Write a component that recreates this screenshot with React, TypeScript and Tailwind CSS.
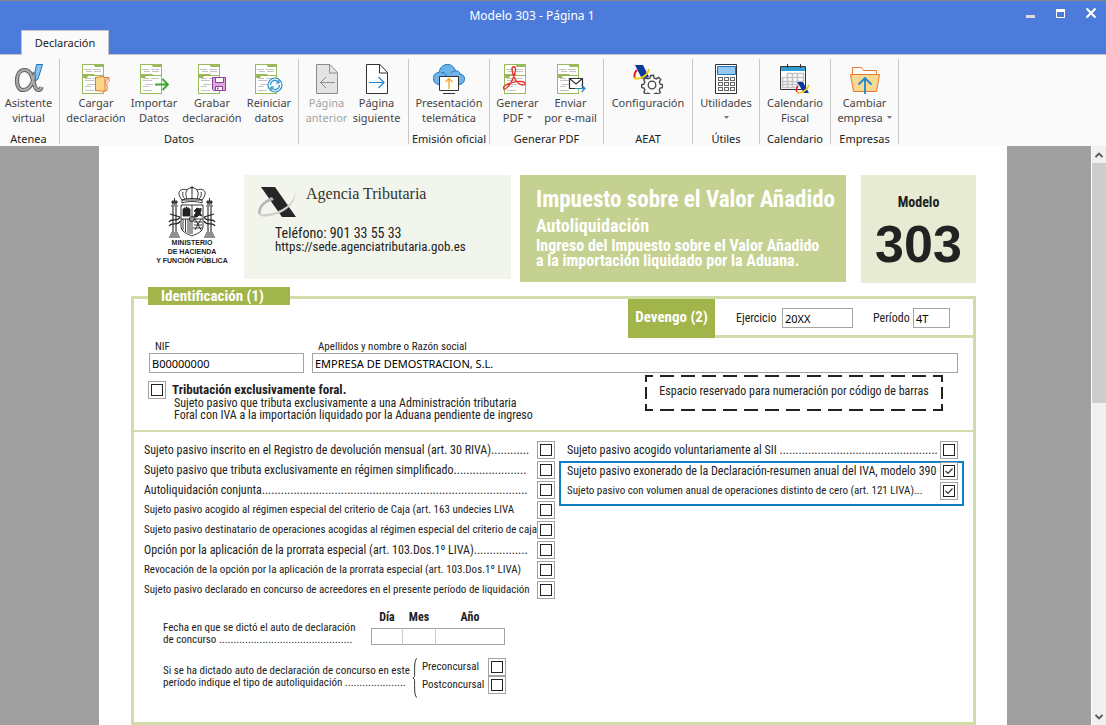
import type { ReactNode } from "react";

function Doc({ children }: { children?: ReactNode }) {
    return (
        <svg width="30" height="30" viewBox="0 0 30 30" fill="none">
            <rect x="1.5" y="0.5" width="21" height="29" fill="#fff" stroke="#9aba59" />
            <path d="M12 0h11v3H14zM1 10h12l1 1h9v1H7l-1 2H1z" fill="#9aba59" />
            <path d="M3 5.5h7M12 5.5h8M5 7.5h6M13 7.5h7M4 14.5h6M12 14.5h8M4 16.5h9M6 20.5h8M4 22.5h6M4 26.5h9" stroke="#c3c3c3" />
            {children}
        </svg>
    );
}

function AlphaIcon() {
    return (
        <svg width="30" height="30" viewBox="0 0 30 30" fill="none">
            <path d="M21 8C20 15 17 26 9 26 4.500 26 3 21 3 16.500 3 11 5.500 6 10.500 6c6 0 7.500 6 9 11.500 1 5 2.500 8.500 5 8.500 1.500 0 2.500-1 3-3" stroke="#5e5e5e" strokeWidth="4.200" />
            <path d="M21 8C20 15 17 26 9 26 4.500 26 3 21 3 16.500 3 11 5.500 6 10.500 6c6 0 7.500 6 9 11.500 1 5 2.500 8.500 5 8.500 1.500 0 2.500-1 3-3" stroke="#acacac" strokeWidth="2.200" />
            <path d="M22.500.5h6L24 15l-2.500 2-.5-9z" fill="#84c3f2" stroke="#1e74b8" />
        </svg>
    );
}

function LoadIcon() {
    return (
        <Doc>
            <path d="M14.500 13.500h13l-3 4-2 9h-8z" fill="#fdebd0" stroke="#e8792c" />
            <path d="M14.500 13.500 22 12.500l2 2v13l-9.500-1z" fill="#f8d78c" stroke="#e8792c" />
            <path d="M24 26.500h2v-7l2-2v-4" stroke="#e8792c" />
        </Doc>
    );
}

function ImportIcon() {
    return (
        <Doc>
            <path d="M16 20.500h13M23.500 15l5.500 5.500-5.500 5.500" stroke="#3ba52c" strokeWidth="1.800" />
        </Doc>
    );
}

function SaveIcon() {
    return (
        <Doc>
            <path d="M15.500 13.500h13v13h-12l-1-1z" fill="#d7a9dc" stroke="#913e9c" />
            <path d="M18.500 13.500h8v5h-8z" fill="#fff" stroke="#913e9c" />
            <path d="M18.500 22.500h7v4h-7z" fill="#fff" stroke="#913e9c" />
            <path d="M20 23.500h1.500v2H20z" fill="#913e9c" />
        </Doc>
    );
}

function ResetIcon() {
    return (
        <Doc>
            <circle cx="21" cy="21" r="7" fill="#f4fafd" stroke="#2a8fcb" strokeWidth="1.200" />
            <path d="M16.500 21c0-5 6-6 8-2.500M25 16v3h-3M25.500 21c0 5-6 6-8 2.500M17 26v-3h3" stroke="#2a8fcb" strokeWidth="1.200" />
        </Doc>
    );
}

function PageIcon({ back }: { back?: boolean }) {
    const line = back ? "#8c8c8c" : "#333";
    return (
        <svg width="30" height="30" viewBox="0 0 30 30" fill="none">
            <path d="M4.500.5H18l7.500 8v21h-21z" fill={back ? "#e3e3e3" : "#fff"} stroke={line} />
            <path d="M17.500.5v8.500h8" stroke={line} />
            {back ? (
                <path d="M23 18.500H8.500M14 13l-5.500 5.500L14 24" stroke="#8c8c8c" />
            ) : (
                <path d="M7 18.500h15M16.500 13l5.500 5.500-5.500 5.500" stroke="#1f86d0" strokeWidth="1.200" />
            )}
        </svg>
    );
}

function CloudIcon() {
    return (
        <svg width="34" height="30" viewBox="0 0 34 30" fill="none">
            <path d="M7 20.500C3 20 1 17 1.500 13.500 2 10 4.500 8.500 7 8.500 8 3 11.500.5 15.500.5c4 0 7 2.500 8 6.500 2.500-.5 4.500 1 4.500 3 3 .5 5 2.500 4.500 5.500-.5 3-2.500 5-5.500 5z" fill="#6db4ea" stroke="#1e74b8" />
            <path d="M9 9c3-1 5 1 5.500 3M23 7c-2 0-3.500 1-4 2" stroke="#1e74b8" />
            <path d="M7.500 12.500h19v14h-19z" fill="#fff" stroke="#333" />
            <path d="M11 29.500h12" stroke="#333" />
            <path d="M17 25v-10M13.500 18l3.500-3.500 3.500 3.500" stroke="#f2a92c" strokeWidth="1.400" />
        </svg>
    );
}

function PdfIcon() {
    return (
        <Doc>
            <path d="M9 5c0-3 3.500-3 3.500 0 0 5-4.500 16-9.500 19.500-3 2-4-.5-1.500-2.500C6 19 13 17 18.500 17.500c4.500.5 4.500 4 1 3.500C13 20 9 10 9 5z" stroke="#e5352d" strokeWidth="1.400" />
        </Doc>
    );
}

function MailIcon() {
    return (
        <Doc>
            <path d="M13.500 14.500h13v10h-13z" fill="#fff" stroke="#333" strokeWidth="1.200" />
            <path d="m13.500 14.500 6.500 5.500 6.500-5.500" stroke="#333" strokeWidth="1.200" />
            <path d="M19 24.500h10M25.500 21l3.500 3.500-3.500 3.500" stroke="#1f86d0" strokeWidth="1.200" />
        </Doc>
    );
}

function GearIcon() {
    return (
        <svg width="30" height="30" viewBox="0 0 30 30" fill="none">
            <path d="M2 1h8l6 12-7 2z" fill="#0a3a9c" />
            <path d="M4 6C1 9 1 12 2 14" stroke="#e02020" strokeWidth="2" />
            <path d="M1 14c7 2 13-2 15-9" stroke="#f7c61a" strokeWidth="2" />
            <path d="m17.500 11.500 3-.2.6 2.700 2.200.9 2.400-1.500 2.100 2.100-1.500 2.400.9 2.200 2.300.5v3l-2.300.5-.9 2.200 1.100 1.900-2.100 2-2-1-2.200.9-.6 1.700h-3l-.5-1.700-2.200-.9-2 1-2-2 1.100-2-.9-2.100-2.300-.5v-3l2.300-.5.9-2.200-1.200-2 2-2.200 2.200 1.200 2.100-.9z" fill="#fafafa" stroke="#444" strokeWidth="1.300" />
            <circle cx="19" cy="21" r="3.800" stroke="#444" strokeWidth="1.300" />
        </svg>
    );
}

function CalculatorIcon() {
    return (
        <svg width="30" height="30" viewBox="0 0 30 30" fill="none">
            <path d="M4.500.5h21v29h-21z" fill="#fff" stroke="#333" />
            <path d="M6.500 2.500h18v8h-18z" fill="#93c9f4" stroke="#1e74b8" />
            {[13.5, 18.5, 23.5].map((y) =>
                [7.5, 13.5, 19.5].map((x) => (
                    <rect key={`${x}-${y}`} x={x} y={y} width="4" height="3" stroke="#666" />
                ))
            )}
        </svg>
    );
}

function CalendarIcon() {
    return (
        <svg width="30" height="30" viewBox="0 0 30 30" fill="none">
            <path d="M.5 2.500h25v23H.5z" fill="#fff" stroke="#333" />
            <path d="M1 3h24v4H1z" fill="#2f9fd0" />
            <path d="M7.500 0v4M20.500 0v4" stroke="#333" />
            <path d="M7 9.500h16.500v4H2.500v4h21v-8M2.500 13.500v10h15v-14M7.500 9.500v14M12.500 9.500v14M2.500 20.500h16" stroke="#c4c4c4" strokeWidth="1.600" />
            <path d="M17 18h6l6 11h-5z" fill="#0a3a9c" />
            <path d="M18 22c-2 2-2 4-1 6" stroke="#e02020" strokeWidth="1.500" />
            <path d="M17 29c6 0 10-3 12-8" stroke="#f7c61a" strokeWidth="1.800" />
        </svg>
    );
}

function FolderIcon() {
    return (
        <svg width="30" height="30" viewBox="0 0 30 30" fill="none">
            <path d="M2.500 10.500v-7h9l2 3h13v4" fill="#fff" stroke="#e8792c" />
            <path d="M.5 10.500h29l-3 17h-23z" fill="#f7d992" stroke="#e8792c" />
            <path d="M15 30V14.500M8.500 20.500l6.500-6.500 6.500 6.500" stroke="#1f86d0" strokeWidth="1.800" />
        </svg>
    );
}

type Tool = { lines: string[]; icon: ReactNode; width: string; menu?: boolean; disabled?: boolean };
type Group = { name: string; width: string; tools: Tool[] };

const groups: Group[] = [
    { name: "Atenea", width: "w-[60px] pr-[2px]", tools: [{ lines: ["Asistente", "virtual"], icon: <AlphaIcon />, width: "w-[56px]" }] },
    {
        name: "Datos",
        width: "w-[239px]",
        tools: [
            { lines: ["Cargar", "declaración"], icon: <LoadIcon />, width: "ml-[6px] w-[58px]" },
            { lines: ["Importar", "Datos"], icon: <ImportIcon />, width: "w-[58px]" },
            { lines: ["Grabar", "declaración"], icon: <SaveIcon />, width: "w-[58px]" },
            { lines: ["Reiniciar", "datos"], icon: <ResetIcon />, width: "w-[56px]" },
        ],
    },
    {
        name: "",
        width: "w-[110px]",
        tools: [
            { lines: ["Página", "anterior"], icon: <PageIcon back />, width: "w-[50px]", disabled: true },
            { lines: ["Página", "siguiente"], icon: <PageIcon />, width: "mr-1 w-[50px]" },
        ],
    },
    { name: "Emisión oficial", width: "w-[81px]", tools: [{ lines: ["Presentación", "telemática"], icon: <CloudIcon />, width: "w-[76px]" }] },
    {
        name: "Generar PDF",
        width: "w-[114px]",
        tools: [
            { lines: ["Generar", "PDF"], icon: <PdfIcon />, width: "w-[52px]", menu: true },
            { lines: ["Enviar", "por e-mail"], icon: <MailIcon />, width: "mr-1 w-[54px]" },
        ],
    },
    { name: "AEAT", width: "w-[89px]", tools: [{ lines: ["Configuración"], icon: <GearIcon />, width: "w-[80px]" }] },
    { name: "Útiles", width: "w-[67px]", tools: [{ lines: ["Utilidades", ""], icon: <CalculatorIcon />, width: "w-[60px]", menu: true }] },
    { name: "Calendario", width: "w-[71px]", tools: [{ lines: ["Calendario", "Fiscal"], icon: <CalendarIcon />, width: "w-[64px]" }] },
    { name: "Empresas", width: "w-[68px]", tools: [{ lines: ["Cambiar", "empresa"], icon: <FolderIcon />, width: "w-[60px]", menu: true }] },
];

function ToolButton({ tool }: { tool: Tool }) {
    return (
        <button
            type="button"
            disabled={tool.disabled}
            className={`flex shrink-0 flex-col items-center whitespace-nowrap leading-[15px] ${tool.width} ${
                tool.disabled ? "text-[#a3a3a3]" : "text-[#444]"
            }`}
        >
            {tool.icon}
            <span className="mt-px">{tool.lines[0]}</span>
            {tool.lines.length > 1 && (
                <span className="flex h-[15px] items-center gap-1">
                    {tool.lines[1]}
                    {tool.menu && (
                        <svg width="5" height="3" viewBox="0 0 5 3">
                            <path d="M0 0h5L2.500 3z" fill="#777" />
                        </svg>
                    )}
                </span>
            )}
        </button>
    );
}

function TitleBar() {
    return (
        <header className="flex h-[55px] shrink-0 flex-col border-t border-b border-t-[#858585] border-b-[#c4c4c4] bg-[#4c7bdb]">
            <div className="flex h-[29px] items-center">
                <h1 className="flex-1 pl-[44px] text-center text-[12px] text-white">Modelo 303 - Página 1</h1>
                <div className="flex items-center gap-2 pr-1 pb-[5px]">
                    <button type="button" aria-label="Minimizar" className="grid h-5 w-[22px] place-items-center">
                        <svg width="10" height="10" viewBox="0 0 10 10">
                            <path d="M0 7h9v3H0z" fill="#dcdcdc" />
                        </svg>
                    </button>
                    <button type="button" aria-label="Maximizar" className="grid h-5 w-[22px] place-items-center">
                        <svg width="10" height="10" viewBox="0 0 10 10">
                            <path d="M0 1h9v9H0zM1 4v5h7V4z" fill="#fff" fillRule="evenodd" />
                        </svg>
                    </button>
                    <button type="button" aria-label="Cerrar" className="grid h-5 w-[22px] place-items-center">
                        <svg width="10" height="10" viewBox="0 0 10 10">
                            <path d="m.5.5 9 9M9.500.5l-9 9" stroke="#fff" strokeWidth="2.200" />
                        </svg>
                    </button>
                </div>
            </div>
            <nav className="-mb-px flex pl-[21px]">
                <button type="button" className="h-[25px] w-[88px] border border-b-0 border-[#c4c4c4] bg-[#fafafa] text-[11px] text-[#222]">
                    Declaración
                </button>
            </nav>
        </header>
    );
}

function Ribbon() {
    return (
        <div className="flex h-[91px] shrink-0 bg-[#fafafa] pt-1 pb-[2px] text-[11px] text-[#222]">
            {groups.map((group, i) => (
                <div key={i} className={`flex shrink-0 flex-col items-center border-r border-[#c8c8c8] pt-[5px] ${group.width}`}>
                    <div className="flex flex-1 items-start justify-center">
                        {group.tools.map((tool) => (
                            <ToolButton key={tool.lines.join(" ")} tool={tool} />
                        ))}
                    </div>
                    <span className="h-[11px] whitespace-nowrap leading-3">{group.name}</span>
                </div>
            ))}
        </div>
    );
}

function Tick({ id, checked }: { id: string; checked?: boolean }) {
    return (
        <span className="grid size-[18px] shrink-0 place-items-center border border-[#a3a3a3] bg-white">
            <input
                id={id}
                type="checkbox"
                defaultChecked={checked}
                className="peer col-start-1 row-start-1 size-3 appearance-none border border-[#222]"
            />
            <svg viewBox="0 0 12 12" className="pointer-events-none invisible col-start-1 row-start-1 size-3 peer-checked:visible">
                <path d="m2.500 6 2.500 2.500 4.500-5" fill="none" stroke="#333" strokeWidth="1.200" />
            </svg>
        </span>
    );
}

type Row = { id: string; text: string; dots?: number; checked?: boolean; small?: boolean };

function TickRow({ id, text, dots = 0, checked, small }: Row) {
    return (
        <div className="flex h-5 items-start justify-between">
            <label htmlFor={id} className={`whitespace-nowrap leading-[18px] ${small ? "text-[11px]" : "text-[12px]"}`}>
                {text}
                {".".repeat(dots)}
            </label>
            <Tick id={id} checked={checked} />
        </div>
    );
}

const leftRows: Row[] = [
    { id: "redeme", text: "Sujeto pasivo inscrito en el Registro de devolución mensual (art. 30 RIVA)", dots: 12 },
    { id: "simplificado", text: "Sujeto pasivo que tributa exclusivamente en régimen simplificado", dots: 23 },
    { id: "conjunta", text: "Autoliquidación conjunta", dots: 84 },
    { id: "caja", text: "Sujeto pasivo acogido al régimen especial del criterio de Caja (art. 163 undecies LIVA", small: true },
    { id: "destinatario", text: "Sujeto pasivo destinatario de operaciones acogidas al régimen especial del criterio de caja", small: true },
    { id: "prorrata", text: "Opción por la aplicación de la prorrata especial (art. 103.Dos.1º LIVA)", dots: 17 },
    { id: "revocacion", text: "Revocación de la opción por la aplicación de la prorrata especial (art. 103.Dos.1º LIVA)", small: true },
    { id: "concurso", text: "Sujeto pasivo declarado en concurso de acreedores en el presente período de liquidación", small: true },
];

function CoatOfArms() {
    return (
        <svg width="48" height="52" viewBox="0 0 48 52" fill="none" stroke="#222" strokeWidth="0.900">
            <path d="M12 11c-4-7 4-9 7-7 2-3 8-3 10 0 4-2 11 0 7 7l-2 3H14z" />
            <path d="M14 14c5-2 15-2 20 0v3c-5-2-15-2-20 0zM24 0v4M22.500 1.500h3M19 4c-2 3-1 6 0 9M29 4c2 3 1 6 0 9M24 4v9M15 6c-1 3 0 5 2 7M33 6c1 3 0 5-2 7" />
            <path d="M13 19h22v21c0 6-5 7-11 10-6-3-11-4-11-10zM24 19v29M13 33h22" fill="#fff" />
            <path d="M15 30v-7h1v-1h1v1h1v-2h1v2h1v-1h1v1h1v7z" fill="#222" />
            <path d="M26 31c0-3 2-3 2-5l-2-1 3-3 3 1 1-1v3l-1 2 2 3-3-1-2 2z" fill="#222" />
            <path d="M15 33v11M17.500 33v13M20 33v14M22 33v15M26 36h8M26 39h8M25 42h9M27 33l6 11M33 33l-6 11" />
            <circle cx="24" cy="33" r="2.500" fill="#999" />
            <path d="M5 21v25M8 21v25M40 21v25M43 21v25M3 20h7M38 20h7M4 18h5M39 18h5M3 47h7M38 47h7M1 51h11M36 51h11M2 49h9M37 49h9" strokeWidth="1.100" />
            <path d="M4 15h5v2H4zM39 15h5v2h-5zM6.500 12v3M41.500 12v3" fill="#555" />
            <path d="M1 36c3-5 8 1 11-5M1 40c3-5 9 1 11-5M36 31c3 6 8 0 11 5M36 35c3 6 9 0 11 5M2 28l10 3M46 28l-10 3" strokeWidth="1.200" />
        </svg>
    );
}

function AgencyLogo() {
    return (
        <svg width="40" height="34" viewBox="0 0 40 34" fill="none">
            <path d="M4 2h14l21 30H25z" fill="#262626" />
            <path d="M15 12C5 16-1 24 2 30l2-1C2 24 8 17 17 15z" fill="#b5b5b5" />
            <path d="M38 7c0 13-19 24-36 22 2 3 6 3 11 2C27 29 40 18 38 7z" fill="#cfcfcf" />
        </svg>
    );
}

function FormHeader() {
    return (
        <div className="flex items-start">
            <div className="flex w-[113px] shrink-0 flex-col items-center pt-[11px] pl-[9px]">
                <CoatOfArms />
                <p className="text-center font-['Liberation_Sans',sans-serif] text-[7px] leading-[9px] font-bold whitespace-nowrap text-[#222]">
                    MINISTERIO
                    <br />
                    DE HACIENDA
                    <br />
                    Y FUNCIÓN PÚBLICA
                </p>
            </div>
            <div className="h-[104px] min-w-0 flex-[267] bg-[#f2f5ec] pt-[10px] pl-[13px]">
                <div className="flex items-start gap-[9px]">
                    <AgencyLogo />
                    <span className="font-['Liberation_Serif',serif] text-[16px] leading-[18px] text-[#333]">Agencia Tributaria</span>
                </div>
                <div className="mt-[7px] flex flex-col pl-[18px] leading-[14px]">
                    <span className="text-[14px]">Teléfono: 901 33 55 33</span>
                    <a href="https://sede.agenciatributaria.gob.es" className="text-[13px]">https://sede.agenciatributaria.gob.es</a>
                </div>
            </div>
            <div className="ml-[9px] h-[107px] min-w-0 flex-[326] bg-[#c5d190] pt-3 pl-4 font-bold whitespace-nowrap text-white">
                <h2 className="text-[23px] leading-[26px]">Impuesto sobre el Valor Añadido</h2>
                <h3 className="mt-[3px] text-[18px] leading-[20px]">Autoliquidación</h3>
                <p className="mt-[2px] text-[16px] leading-[15px]">
                    Ingreso del Impuesto sobre el Valor Añadido
                    <br />
                    a la importación liquidado por la Aduana.
                </p>
            </div>
            <div className="ml-[15px] flex h-[108px] w-[115px] shrink-0 flex-col items-center bg-[#e8ebd3] pt-[18px] font-bold text-[#222]">
                <span className="text-[14px] leading-[18px]">Modelo</span>
                <span className="font-['Liberation_Sans',sans-serif] text-[52px] leading-[66px]">303</span>
            </div>
        </div>
    );
}

const field = "h-5 border border-[#a3a3a3] bg-white px-[2px] font-['Noto_Sans',sans-serif] text-[11px] text-black outline-none";

function Identification() {
    return (
        <section className="relative mt-[13px] border-[3px] border-[#d1dcab] pb-6">
            <h2 className="absolute -top-3 left-[14px] h-[18px] w-[142px] bg-[#a2b54a] pl-[13px] text-[15px] leading-[19px] font-bold text-white">
                Identificación (1)
            </h2>
            <div className="flex justify-end">
                <h2 className="h-[39px] w-[87px] bg-[#a2b54a] text-center text-[15px] leading-[36px] font-bold text-white">Devengo (2)</h2>
                <div className="flex h-[39px] w-[258px] items-center border-b-[3px] border-[#d1dcab] pt-[2px] pl-[21px]">
                    <label htmlFor="ejercicio" className="w-[46px]">Ejercicio</label>
                    <input id="ejercicio" defaultValue="20XX" className={`${field} w-[71px]`} />
                    <label htmlFor="periodo" className="ml-5 w-10">Período</label>
                    <input id="periodo" defaultValue="4T" className={`${field} w-[37px]`} />
                </div>
            </div>

            <div className="flex gap-2 pt-[2px] pr-[15px] pl-[15px]">
                <div className="flex w-[155px] flex-col">
                    <label htmlFor="nif" className="pl-[6px] text-[11px] leading-[13px]">NIF</label>
                    <input id="nif" defaultValue="B00000000" className={field} />
                </div>
                <div className="flex flex-1 flex-col">
                    <label htmlFor="nombre" className="pl-[6px] text-[11px] leading-[13px]">Apellidos y nombre o Razón social</label>
                    <input id="nombre" defaultValue="EMPRESA DE DEMOSTRACION, S.L." className={field} />
                </div>
            </div>

            <div className="flex h-[59px] items-start justify-between border-b-2 border-[#d1dcab] pt-[2px] pr-[30px] pl-[14px]">
                <div className="flex gap-[6px] pt-[6px]">
                    <Tick id="foral" />
                    <div className="leading-[12px]">
                        <label htmlFor="foral" className="block pt-[3px] text-[13px] leading-[12px] font-bold">Tributación exclusivamente foral.</label>
                        <p className="pt-px pl-[2px] whitespace-nowrap">
                            Sujeto pasivo que tributa exclusivamente a una Administración tributaria
                            <br />
                            Foral con IVA a la importación liquidado por la Aduana pendiente de ingreso
                        </p>
                    </div>
                </div>
                <div className="grid h-9 w-[298px] place-items-center">
                    <svg width="298" height="36" viewBox="0 0 298 36" fill="none" stroke="#222" strokeWidth="2" className="col-start-1 row-start-1">
                        <path d="M1 1h296M1 35h296" strokeDasharray="7 7 14 7 14 7 14 7 14 7 14 7 14 7 14 7 14 7 14 7 14 7 14 7 14 7 14 7 7" />
                        <path d="M1 0v7M1 12v12M1 29v7M297 0v7M297 12v12M297 29v7M290 1h8M290 35h8" />
                    </svg>
                    <span className="col-start-1 row-start-1 pb-1 whitespace-nowrap">Espacio reservado para numeración por código de barras</span>
                </div>
            </div>

            <div className="flex items-start justify-between pt-[9px] pr-[9px] pl-[10px]">
                <div className="w-[411px]">
                    {leftRows.map((row) => (
                        <TickRow key={row.id} {...row} />
                    ))}
                </div>
                <div className="w-[405px]">
                    <div className="pr-[6px] pl-2">
                        <TickRow id="sii" text="Sujeto pasivo acogido voluntariamente al SII " dots={50} />
                    </div>
                    <div className="pt-px pr-[6px] pb-1 pl-2 ring-2 ring-[#0f80c8] ring-inset">
                        <TickRow id="exonerado" text="Sujeto pasivo exonerado de la Declaración-resumen anual del IVA, modelo 390" checked />
                        <TickRow id="volumen" text="Sujeto pasivo con volumen anual de operaciones distinto de cero (art. 121 LIVA)" dots={3} checked small />
                    </div>
                </div>
            </div>

            <div className="flex gap-[19px] pt-[9px] pl-[29px] text-[12px] leading-[12px]">
                <p className="w-[189px] pt-[12px] text-[11px] leading-[12px] whitespace-nowrap">
                    Fecha en que se dictó el auto de declaración
                    <br />
                    de concurso {".".repeat(46)}
                </p>
                <div className="grid grid-cols-[32px_32px_70px] text-center font-bold">
                    <label htmlFor="dia" className="h-[17px] pt-px">Día</label>
                    <label htmlFor="mes" className="h-[17px] pt-px">Mes</label>
                    <label htmlFor="anio" className="h-[17px] pt-px">Año</label>
                    <input id="dia" className="h-[17px] w-full border border-[#a3a3a3] border-r-[#ccc] bg-white" />
                    <input id="mes" className="h-[17px] w-full border border-x-0 border-[#a3a3a3] bg-white" />
                    <input id="anio" className="h-[17px] w-full border border-[#a3a3a3] border-l-[#ccc] bg-white" />
                </div>
            </div>

            <div className="flex pt-[12px] pl-[29px] text-[11px] leading-[12px]">
                <p className="w-[249px] pt-[7px] whitespace-nowrap">
                    Si se ha dictado auto de declaración de concurso en este
                    <br />
                    período indique el tipo de autoliquidación {".".repeat(21)}
                </p>
                <svg width="6" height="40" viewBox="0 0 6 40" fill="none" stroke="#333">
                    <path d="M5 .5C1.500 1 3 17 2.500 18.500L1 20l1.500 1.500C3 23 1.500 39 5 39.500" />
                </svg>
                <div className="ml-1 flex w-[84px] flex-col">
                    <div className="flex items-center justify-between">
                        <label htmlFor="pre">Preconcursal</label>
                        <Tick id="pre" />
                    </div>
                    <div className="flex items-center justify-between">
                        <label htmlFor="post">Postconcursal</label>
                        <Tick id="post" />
                    </div>
                </div>
            </div>
        </section>
    );
}

function ScrollBar() {
    return (
        <div className="flex w-[15px] shrink-0 flex-col border-l border-white bg-[#f0f0f0]">
            <button type="button" aria-label="Subir" className="grid h-[17px] place-items-center">
                <svg width="8" height="6" viewBox="0 0 8 6">
                    <path d="m.5 5 3.500-3.500L7.500 5" fill="none" stroke="#555" strokeWidth="1.800" />
                </svg>
            </button>
            <div className="flex-1">
                <div className="h-[44%] bg-[#cdcdcd]" />
            </div>
            <button type="button" aria-label="Bajar" className="grid h-[17px] place-items-center">
                <svg width="8" height="6" viewBox="0 0 8 6">
                    <path d="M.5 1 4 4.500 7.500 1" fill="none" stroke="#555" strokeWidth="1.800" />
                </svg>
            </button>
        </div>
    );
}

export default function App() {
    return (
        <div className="flex h-screen flex-col overflow-hidden font-['Noto_Sans',sans-serif]">
            <TitleBar />
            <Ribbon />
            <div className="flex min-h-0 flex-1">
                <main className="flex-1 overflow-hidden bg-[#a0a0a0] pr-[84px] pl-[99px]">
                    <div className="min-h-full bg-white pt-[29px] pr-[31px] pl-8 font-['Roboto_Condensed','Liberation_Sans_Narrow',sans-serif] text-[12px] text-[#222]">
                        <FormHeader />
                        <Identification />
                    </div>
                </main>
                <ScrollBar />
            </div>
        </div>
    );
}
